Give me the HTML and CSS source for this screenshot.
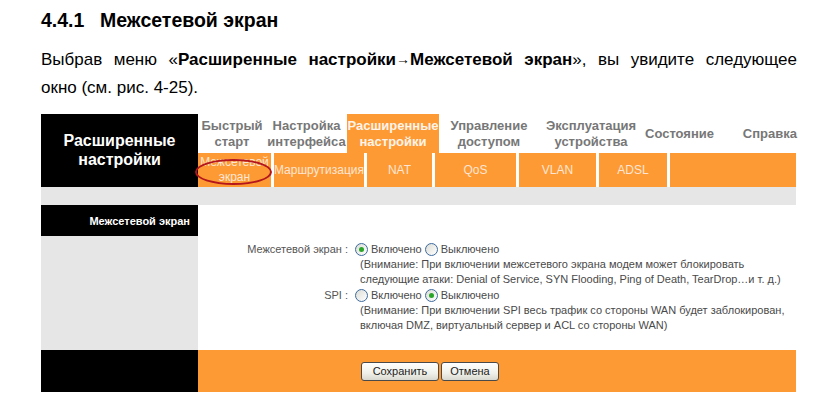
FILE: index.html
```html
<!DOCTYPE html>
<html lang="ru">
<head>
  <meta charset="UTF-8" />
  <meta name="viewport" content="width=device-width, initial-scale=1.0">
  <title>Межсетевой экран</title>
  <link rel="stylesheet" href="styles.css">
</head>
<body>
  <div class="page">
    <h1 class="title"><span class="num">4.4.1</span>Межсетевой экран</h1>
    <p class="intro"><span class="line">Выбрав меню «<b>Расширенные настройки<span class="arrow">→</span>Межсетевой экран</b>», вы увидите следующее</span>окно (см. рис. 4-25).</p>

    <div class="router">
      <div class="top">
        <div class="brand">Расширенные<br>настройки</div>
        <div class="nav">
          <ul class="tabs">
            <li class="w1">Быстрый<br>старт</li>
            <li class="w2">Настройка<br>интерфейса</li>
            <li class="w3 active">Расширенные<br>настройки</li>
            <li class="w4">Управление<br>доступом</li>
            <li class="w5">Эксплуатация<br>устройства</li>
            <li class="w6">Состояние</li>
            <li class="w7">Справка</li>
          </ul>
          <ul class="subnav">
            <li class="s1 current">Межсетевой<br>экран<span class="mark"></span></li>
            <li class="s2">Маршрутизация</li>
            <li class="s3">NAT</li>
            <li class="s4">QoS</li>
            <li class="s5">VLAN</li>
            <li class="s6">ADSL</li>
            <li class="s7"></li>
          </ul>
        </div>
      </div>

      <div class="band"></div>

      <div class="main">
        <div class="side">
          <div class="side-title">Межсетевой экран</div>
        </div>
        <div class="content">
          <div class="row">
            <div class="label">Межсетевой экран :</div>
            <div class="value">
              <span class="radio checked"></span>Включено
              <span class="radio"></span>Выключено
            </div>
          </div>
          <div class="note">(Внимание: При включении межсетевого экрана модем может блокировать<br>следующие атаки: Denial of Service, SYN Flooding, Ping of Death, TearDrop…и т. д.)</div>
          <div class="row">
            <div class="label">SPI :</div>
            <div class="value">
              <span class="radio"></span>Включено
              <span class="radio checked"></span>Выключено
            </div>
          </div>
          <div class="note">(Внимание: При включении SPI весь трафик со стороны WAN будет заблокирован,<br>включая DMZ, виртуальный сервер и ACL со стороны WAN)</div>
        </div>
      </div>

      <div class="footer">
        <div class="foot-side"></div>
        <div class="foot-bar">
          <button class="btn save">Сохранить</button>
          <button class="btn cancel">Отмена</button>
        </div>
      </div>
    </div>
  </div>
</body>
</html>
```

FILE: styles.css
```css
body, html {
  margin: 0; padding: 0;
  background: #fff;
  font-family: "Liberation Sans", Arial, sans-serif;
  color: #000;
}
.page {
  padding: 0 41px;
  width: 756px;
}
.title {
  margin: 0;
  padding-top: 6px;
  font-size: 19.5px;
  line-height: 28px;
  font-weight: bold;
}
.title .num {
  display: inline-block;
  width: 59px;
}
.intro {
  margin: 11px 0 0 0;
  font-size: 17px;
  line-height: 28px;
}
.intro .line {
  display: block;
  text-align: justify;
  text-align-last: justify;
}
.intro .arrow {
  font-size: 14px;
  vertical-align: 1px;
}

/* router screenshot */
.router {
  margin-top: 12px;
  width: 755px;
}
.top {
  display: flex;
  height: 73px;
}
.brand {
  width: 157px;
  background: #000;
  color: #fff;
  font-weight: bold;
  font-size: 16px;
  line-height: 19px;
  text-align: center;
  padding-top: 17px;
  box-sizing: border-box;
}
.nav {
  flex: 1;
  display: flex;
  flex-direction: column;
}
.tabs, .subnav {
  list-style: none;
  margin: 0;
  padding: 0;
  display: flex;
}
.tabs {
  height: 39px;
}
.tabs li {
  font-size: 13px;
  font-weight: bold;
  line-height: 16px;
  color: #777;
  text-align: center;
  white-space: nowrap;
  display: flex;
  align-items: center;
  justify-content: center;
}
.tabs li.active {
  background: #fd9a34;
  color: #fff4ea;
}
.tabs .w1 { width: 68px; }
.tabs .w2 { width: 81px; }
.tabs .w3 { width: 92px; }
.tabs .w4 { width: 100px; }
.tabs .w5 { width: 104px; }
.tabs .w6 { width: 70px; justify-content: flex-start; padding-left: 2px; }
.tabs .w7 { flex: 1; justify-content: flex-end; margin-right: -1px; }

.subnav {
  height: 34px;
  background: #fd9a34;
}
.subnav li {
  position: relative;
  border-right: 3px solid #fff;
  color: #ffe6d4;
  font-size: 12px;
  line-height: 15px;
  text-align: center;
  white-space: nowrap;
  display: flex;
  align-items: center;
  justify-content: center;
}
.subnav .s1 { width: 73px; }
.subnav .s2 { width: 90px; }
.subnav .s3 { width: 65px; }
.subnav .s4 { width: 81px; }
.subnav .s5 { width: 77px; }
.subnav .s6 { width: 68px; }
.subnav .s7 { flex: 1; border-right: none; }
.mark {
  position: absolute;
  left: -3px;
  top: 6px;
  width: 73px;
  height: 22px;
  border: 2px solid #b3161c;
  border-radius: 50%;
}

.band {
  height: 18px;
  background: #e6e6e6;
}

.main {
  display: flex;
  height: 145px;
}
.side {
  width: 157px;
  background: #e6e6e6;
}
.side-title {
  background: #000;
  color: #fff;
  font-size: 11px;
  font-weight: bold;
  height: 31px;
  line-height: 33px;
  text-align: right;
  padding-right: 8px;
}
.content {
  flex: 1;
  padding-top: 36px;
  font-size: 11px;
  color: #4a4a4a;
}
.row {
  display: flex;
  height: 16px;
  line-height: 16px;
}
.label {
  width: 150px;
  text-align: right;
  color: #555;
}
.value {
  padding-left: 7px;
  display: flex;
  align-items: center;
}
.radio {
  display: inline-block;
  width: 11px;
  height: 11px;
  border: 1px solid #3c6a9e;
  border-radius: 50%;
  background: linear-gradient(135deg, #dcdcd6, #fff);
  box-sizing: content-box;
  position: relative;
  margin-right: 3px;
}
.value .radio + .radio {
  margin-left: 3px;
}
.radio.checked::after {
  content: "";
  position: absolute;
  left: 3px;
  top: 3px;
  width: 5px;
  height: 5px;
  border-radius: 50%;
  background: #2aa52a;
}
.note {
  padding-left: 162px;
  line-height: 15px;
  white-space: nowrap;
}

.footer {
  display: flex;
  height: 42px;
}
.foot-side {
  width: 157px;
  background: #000;
}
.foot-bar {
  flex: 1;
  background: #fd9a34;
  display: flex;
  align-items: center;
  gap: 2px;
  padding-left: 163px;
}
.btn {
  height: 19px;
  padding: 0;
  font-family: "Liberation Sans", Arial, sans-serif;
  font-size: 11px;
  color: #222;
  border: 1px solid #4a4a4a;
  border-radius: 3px;
  background: linear-gradient(#ffffff, #f0f0ea 60%, #d8d8d0);
  cursor: pointer;
}
.btn.save { width: 78px; }
.btn.cancel { width: 58px; }
```
